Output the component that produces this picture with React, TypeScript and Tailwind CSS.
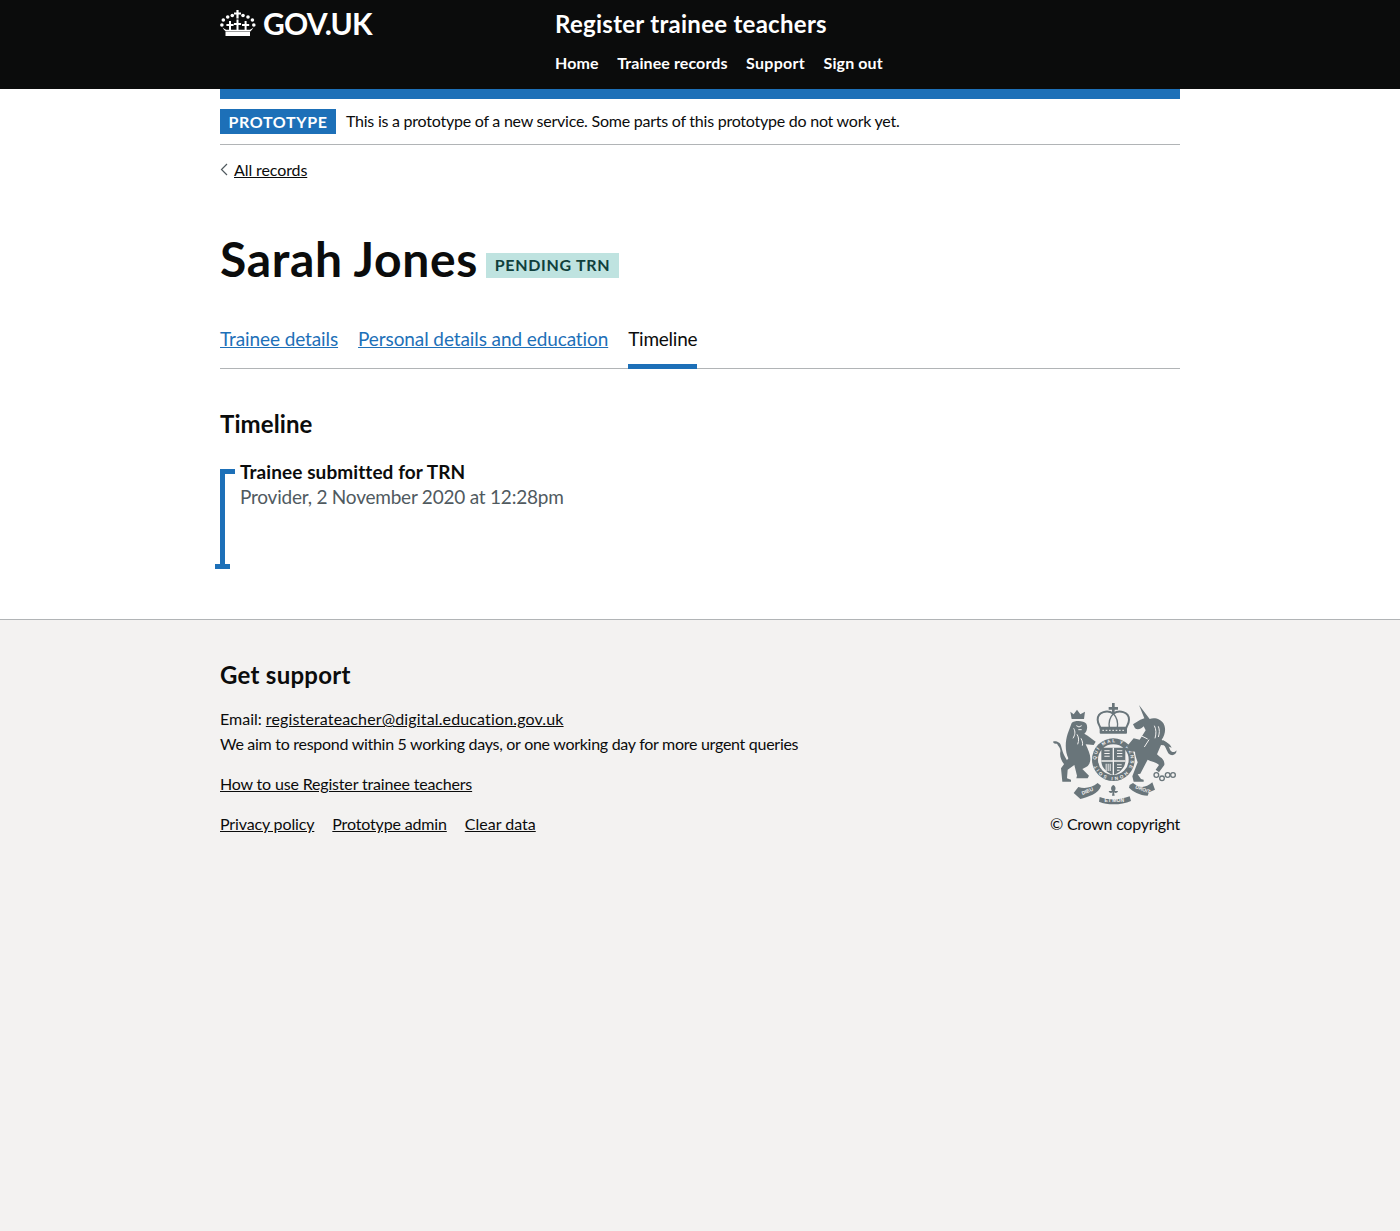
import React from 'react';

const font = { fontFamily: 'Lato, Arial, sans-serif' };

const Crown = () => (
  <svg width="37" height="27" viewBox="0 0 37 27" fill="#fff" aria-hidden="true">
    <path d="M16.4 0h2.2v2.4H21v2.1h-2.4v4h-2.2v-4H14V2.4h2.4z" />
    <circle cx="7.7" cy="7" r="1.8" />
    <circle cx="12.3" cy="5.5" r="1.8" />
    <circle cx="23" cy="5.5" r="1.8" />
    <circle cx="28" cy="7" r="1.8" />
    <circle cx="3.3" cy="10" r="1.8" />
    <circle cx="32.4" cy="10" r="1.8" />
    <circle cx="1.9" cy="15" r="1.8" />
    <circle cx="33.8" cy="15" r="1.8" />
    <path d="M16.5 9.5h2v3.5h2.6v2h-2.6v5h-2v-5h-2.6v-2h2.6z" />
    <path d="M9 11h2v3h2.6v2H11v4H9v-4H6.4v-2H9z" />
    <path d="M24.6 11h2v3h2.6v2h-2.6v4h-2v-4H22v-2h2.6z" />
    <path d="M2.5 17.5c1 1.600 2 3 3.200 4h24.600c1.200-1 2.200-2.400 3.200-4-1.200 1-2.400 1.800-3.600 2.200H6.100c-1.200-.4-2.400-1.200-3.600-2.200z" />
    <rect x="5.5" y="21.8" width="24.500" height="4.200" />
  </svg>
);

const Crest = () => (
  <svg width="125" height="102" viewBox="36 24 375 306" fill="#69757a" aria-hidden="true">
    {/* lion */}
    <path d="M88 50l10 8 10-14 10 14 14-8-3 22H92z" />
    <path d="M92 84c8-8 36-8 44 2 5 10 2 24-6 30l10 6 24 18-6 10-24-2c10 22 20 42 10 60-4 8-12 10-20 14l20 20-4 8H106l2-8-8-32-20 14-2 26 12 4v6H64l-4-40 22-30c-10-20-10-50-2-74z" />
    <path d="M82 220c-14-10-28-30-24-50 2-10-6-16-10-24-6 0-10 0-12-6 8-4 22 2 24 12 4 14 8 34 28 56z" />
    <path d="M98 100c6 10 4 20-2 30M108 118c6 10 6 18 2 30M120 130c4 8 6 14 4 22M106 92l8 4 8-4M112 104h10" fill="none" stroke="#f3f2f1" strokeWidth="3" />
    {/* crown over the shield */}
    <path d="M213 24h8v12h10v8h-10v10h-8V44h-10v-8h10z" />
    <path d="M170 74c0-24 30-30 47-18 17-12 47-6 47 18 0 10-5 16-8 24H178c-3-8-8-14-8-24z" fill="none" stroke="#69757a" strokeWidth="6" />
    <path d="M217 56c-12 12-14 28-12 42M217 56c12 12 14 28 12 42" fill="none" stroke="#69757a" strokeWidth="4" />
    <rect x="176" y="96" width="82" height="20" rx="3" />
    <path d="M184 106h66" stroke="#f3f2f1" strokeWidth="3" strokeDasharray="5 5" />
    {/* shield and garter */}
    <circle cx="217" cy="194" r="64" />
    <circle cx="217" cy="194" r="46" fill="#f3f2f1" />
    <path d="M181 158h72v40c0 20-17 36-36 42-19-6-36-22-36-42z" />
    <path d="M215 158h4v82h-4zM181 196h72v4h-72z" fill="#f3f2f1" />
    <path d="M190 166h16v3h-16zM190 174h16v3h-16zM190 182h16v3h-16zM228 166h16v3h-16zM228 174h16v3h-16zM228 182h16v3h-16zM228 208h14v3h-14zM228 216h14v3h-14zM228 224h8v3h-8zM194 206v22h3v-22zM200 206v22h3v-22zM206 206v22h3v-22z" fill="#f3f2f1" />
    <path id="garter" d="M165 194a52 52 0 1 1 104 0a52 52 0 1 1-104 0" fill="none" />
    <text fontSize="14" fontWeight="700" fill="#f3f2f1" fontFamily="Liberation Sans, sans-serif" textLength="310">
      <textPath href="#garter">QUI MAL Y PENSE HONI SOIT</textPath>
    </text>
    {/* unicorn */}
    <path d="M294 30l32 42c14-6 34 0 42 14 8 16 4 34-6 48 8 6 24 8 30 24-10-4-22-8-32-8l-12 28c8 10 24 12 22 32l-16 22-10-8 10-14c-8-8-22-10-34-16l-22 42-8 2 10 14 8 2v6h-30l-4-16 16-42c-4-12-8-22-8-32l-16-2-8-14 20-24 18 4 18-28-6-12c-8 8-18 12-26 6l-6-12 22-14 12-4z" />
    <path d="M366 136c14 4 18 20 22 30 4 8 16 6 18 0 2 10-8 16-16 14-14-4-12-26-26-34z" />
    <path d="M340 92c6 12 6 24 2 38M352 94c4 10 4 20 0 32M324 134l-14 22M300 122l20 10" fill="none" stroke="#f3f2f1" strokeWidth="3" />
    <circle cx="346" cy="240" r="7" fill="none" stroke="#69757a" strokeWidth="4" />
    <circle cx="363" cy="250" r="7" fill="none" stroke="#69757a" strokeWidth="4" />
    <circle cx="380" cy="240" r="7" fill="none" stroke="#69757a" strokeWidth="4" />
    <circle cx="396" cy="240" r="7" fill="none" stroke="#69757a" strokeWidth="4" />
    {/* motto scroll */}
    <path d="M98 294l14-18c20 6 40 2 58-12l10 8c-6 24-40 34-62 40l-4-4z" />
    <path d="M266 270l10-6c16 14 36 18 58-2l8 22-18 8-4 10c-24 0-46-14-56-24z" />
    <path d="M176 306c26 10 60 10 90-2l4 14c-28 12-68 14-96 2z" />
    <path d="M217 270c8 4 8 12 4 18h10c-2 8-10 6-12 4l2 10h-8l2-10c-2 2-10 4-12-4h10c-4-6-4-14 4-18z" />
    <text x="141" y="293" textAnchor="middle" fontSize="15" fontWeight="700" fill="#f3f2f1" transform="rotate(-22 141 293)" fontFamily="Liberation Sans, sans-serif">DIEU</text>
    <text x="220" y="321" textAnchor="middle" fontSize="15" fontWeight="700" fill="#f3f2f1" fontFamily="Liberation Sans, sans-serif">ET MON</text>
    <text x="304" y="288" textAnchor="middle" fontSize="15" fontWeight="700" fill="#f3f2f1" transform="rotate(20 304 288)" fontFamily="Liberation Sans, sans-serif">DROIT</text>
  </svg>
);

const App: React.FC = () => {
  return (
    <div className="flex flex-col min-h-screen bg-white text-[#0b0c0c]" style={font}>
      {/* header */}
      <header className="bg-[#0b0c0c] h-[89px] text-white">
        <div className="mx-auto w-[960px] flex">
          <a className="w-[335px] flex items-center gap-[6px] h-[48px] pb-[2px] text-[30px] font-bold leading-none tracking-[-0.8px]">
            <Crown />
            GOV.UK
          </a>
          <div>
            <div className="text-[24px] font-bold leading-[48px] tracking-[0.28px]">Register trainee teachers</div>
            <nav className="flex gap-[18.5px] text-[16px] font-bold leading-[30px] tracking-[0.1px]">
              <a>Home</a>
              <a>Trainee records</a>
              <a className="tracking-[0.3px]">Support</a>
              <a>Sign out</a>
            </nav>
          </div>
        </div>
      </header>

      <main className="mx-auto w-[960px]">
        <div className="h-[10px] bg-[#1d70b8]" />
        <div className="flex items-center h-[46px] border-b border-[#b1b4b6] gap-[10px]">
          <strong className="bg-[#1d70b8] text-white h-[25px] w-[116px] flex items-center justify-center text-[16px] font-bold tracking-[0.65px] uppercase">Prototype</strong>
          <span className="text-[16px] leading-[24px] pb-[1px] tracking-[-0.24px]">This is a prototype of a new service. Some parts of this prototype do not work yet.</span>
        </div>
        <div className="flex items-center gap-[6px] mt-[13px] h-[23px] text-[16px]">
          <svg width="8" height="13" viewBox="0 0 8 13" fill="none" stroke="#505a5f" strokeWidth="1.2" aria-hidden="true">
            <path d="M7 1L1.5 6.5 7 12" />
          </svg>
          <a className="underline tracking-[-0.1px]">All records</a>
        </div>

        <div className="flex items-center mt-[49px] h-[60px] gap-[8px]">
          <h1 className="text-[48px] font-bold leading-[60px] pb-[3px] tracking-[0.64px]">Sarah Jones</h1>
          <span className="mt-[10px] bg-[#bfe3e0] text-[#10403c] h-[25px] w-[133px] flex items-center justify-center text-[16px] font-bold tracking-[0.7px] uppercase">Pending TRN</span>
        </div>

        <div className="flex gap-[20px] mt-[28px] h-[51px] border-b border-[#b1b4b6] text-[19px]">
          <a className="pt-[7px] text-[#1d70b8] underline tracking-[-0.1px]">Trainee details</a>
          <a className="pt-[7px] text-[#1d70b8] underline tracking-[-0.1px]">Personal details and education</a>
          <a className="pt-[7px] h-[51px] border-b-[5px] border-[#1d70b8] tracking-[-0.25px]">Timeline</a>
        </div>

        <h2 className="mt-[40px] text-[24px] font-bold leading-[30px] tracking-[0.1px]">Timeline</h2>

        {/* timeline with its end ticks */}
        <div className="relative flex flex-col mt-[30px] mb-[50px] h-[100px] border-l-[5px] border-[#1d70b8] pl-[15px]">
          <span className="absolute left-[-5px] top-0 w-[15px] h-[5px] bg-[#1d70b8]" />
          <span className="absolute left-[-10px] bottom-0 w-[15px] h-[5px] bg-[#1d70b8]" />
          <div className="text-[19px] font-bold leading-[25px] mt-[-10px] tracking-[0.08px]">Trainee submitted for TRN</div>
          <div className="text-[19px] leading-[25px] text-[#505a5f] tracking-[-0.22px]">Provider, 2 November 2020 at 12:28pm</div>
        </div>
      </main>

      {/* footer */}
      <footer className="flex-1 bg-[#f3f2f1] border-t border-[#b1b4b6]">
        <div className="mx-auto w-[960px] flex justify-between">
          <div className="text-[16px] leading-[25px]">
            <h2 className="mt-[40px] text-[24px] font-bold leading-[30px] tracking-[0.27px]">Get support</h2>
            <p className="mt-[16px]">
              Email: <a className="underline tracking-[0.14px]">registerateacher@digital.education.gov.uk</a>
            </p>
            <p className="tracking-[-0.28px]">We aim to respond within 5 working days, or one working day for more urgent queries</p>
            <p className="mt-[15px]"><a className="underline tracking-[-0.17px]">How to use Register trainee teachers</a></p>
            <div className="flex gap-[18px] mt-[15px]">
              <a className="underline tracking-[-0.14px]">Privacy policy</a>
              <a className="underline tracking-[-0.16px]">Prototype admin</a>
              <a className="underline">Clear data</a>
            </div>
          </div>
          <div className="flex flex-col items-center mt-[83px] text-[16px] leading-[25px]">
            <Crest />
            <div className="mt-[6px] tracking-[-0.25px]">© Crown copyright</div>
          </div>
        </div>
      </footer>
    </div>
  );
};

export default App;
